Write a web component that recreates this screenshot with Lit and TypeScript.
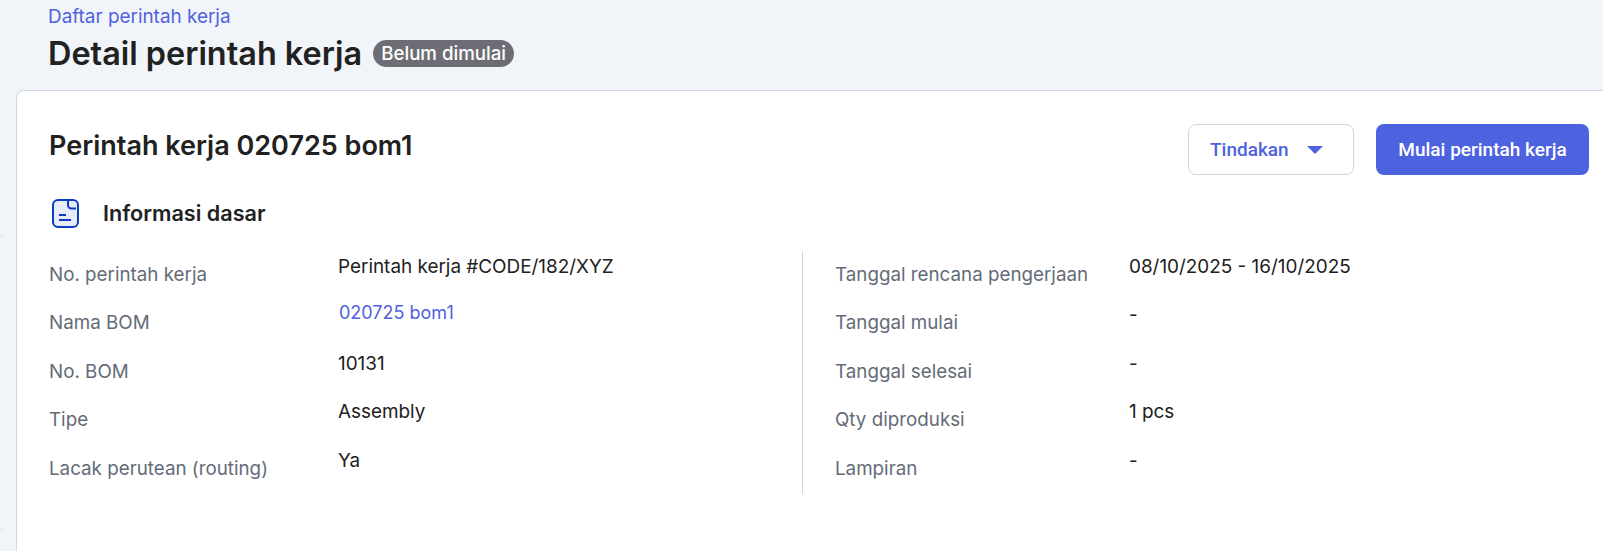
import { LitElement, html, css } from "lit";
import { customElement } from "lit/decorators.js";

const left: [string, string, boolean?][] = [
  ["No. perintah kerja", "Perintah kerja #CODE/182/XYZ"],
  ["Nama BOM", "020725 bom1", true],
  ["No. BOM", "10131"],
  ["Tipe", "Assembly"],
  ["Lacak perutean (routing)", "Ya"],
];
const right: [string, string, boolean?][] = [
  ["Tanggal rencana pengerjaan", "08/10/2025 - 16/10/2025"],
  ["Tanggal mulai", "-"],
  ["Tanggal selesai", "-"],
  ["Qty diproduksi", "1 pcs"],
  ["Lampiran", "-"],
];

@customElement("app-root")
export class AppRoot extends LitElement {
  static styles = css`
    :host {
      display: block;
      width: 1603px;
      height: 551px;
      overflow: hidden;
      background: #f1f4f9;
      font-family: Inter, "Liberation Sans", sans-serif;
      color: #212121;
    }
    .head {
      padding: 6px 0 0 48px;
      height: 85px;
      box-sizing: border-box;
    }
    .crumb {
      font-size: 18.9px;
      line-height: 22px;
      color: #4f62df;
    }
    .title-row {
      display: flex;
      align-items: center;
      gap: 11px;
      margin-top: 6px;
    }
    h1 {
      margin: 0;
      font-size: 32.4px;
      line-height: 40px;
      font-weight: 600;
    }
    .badge {
      background: #6d6e75;
      color: #fff;
      font-size: 18.7px;
      font-weight: 500;
      line-height: 27px;
      height: 27px;
      padding: 0 8px;
      border-radius: 14px;
      margin-top: -1px;
    }
    .card {
      margin: 5px 0 0 16px;
      height: 600px;
      box-sizing: border-box;
      background: #fff;
      border: 1px solid #d3d8e3;
      border-right: none;
      border-radius: 8px 0 0 0;
      padding: 33px 14px 0 32px;
    }
    .top {
      display: flex;
      justify-content: space-between;
      align-items: flex-start;
    }
    h2 {
      margin: 4px 0 0;
      font-size: 27px;
      line-height: 36px;
      font-weight: 600;
    }
    .actions {
      display: flex;
      gap: 22px;
    }
    .btn {
      height: 51px;
      box-sizing: border-box;
      display: flex;
      align-items: center;
      border-radius: 8px;
      font-family: Roboto, sans-serif;
      font-size: 19px;
      font-weight: 500;
    }
    .outline {
      width: 166px;
      padding-left: 21px;
      gap: 18px;
      background: #fff;
      color: #4f62df;
      border: 1px solid #cfd5e1;
    }
    .caret {
      width: 0;
      height: 0;
      border-left: 8.5px solid transparent;
      border-right: 8.5px solid transparent;
      border-top: 8px solid #4f62df;
    }
    .solid {
      width: 213px;
      justify-content: center;
      background: #4d62df;
      color: #fff;
    }
    .section {
      display: flex;
      align-items: center;
      gap: 20px;
      margin-top: 22px;
      padding-left: 2px;
    }
    .section svg {
      display: block;
    }
    h3 {
      margin: 0;
      font-size: 21.6px;
      line-height: 28px;
      font-weight: 600;
    }
    .info {
      display: flex;
      margin-top: 22px;
    }
    .col {
      display: grid;
      grid-template-columns: 289px 1fr;
      grid-auto-rows: 48.4px;
      width: 753px;
      height: 243px;
    }
    .col.second {
      grid-template-columns: 295px 1fr;
      width: auto;
      flex: 1;
      border-left: 1px solid #d6d6d6;
      padding-left: 32px;
      box-sizing: border-box;
    }
    .label {
      font-size: 18.8px;
      line-height: 24px;
      color: #646b78;
      padding-top: 12px;
    }
    .value {
      font-size: 18.9px;
      line-height: 24px;
      color: #212121;
      padding-top: 4px;
    }
    .link {
      color: #4f62df;
      font-size: 18px;
      padding-top: 2px;
      padding-left: 1px;
    }
    .second .value {
      margin-left: -1px;
    }
    .tick {
      position: absolute;
      left: 0;
      width: 5px;
      height: 1px;
      background: #e2e5ec;
    }
  `;

  private rows(items: [string, string, boolean?][]) {
    return items.map(
      ([k, v, link]) => html`
        <div class="label">${k}</div>
        <div class="value ${link ? "link" : ""}">${v}</div>
      `
    );
  }

  render() {
    return html`
      <span class="tick" style="top:236px"></span>
      <span class="tick" style="top:529px"></span>
      <div class="head">
        <div class="crumb">Daftar perintah kerja</div>
        <div class="title-row">
          <h1>Detail perintah kerja</h1>
          <span class="badge">Belum dimulai</span>
        </div>
      </div>
      <div class="card">
        <div class="top">
          <h2>Perintah kerja 020725 bom1</h2>
          <div class="actions">
            <div class="btn outline">Tindakan <span class="caret"></span></div>
            <div class="btn solid">Mulai perintah kerja</div>
          </div>
        </div>
        <div class="section">
          <svg width="32" height="32" viewBox="0 0 32 32" fill="none">
            <path d="M7 3h15a5 5 0 0 1 5 5v17a5 5 0 0 1-5 5H7a5 5 0 0 1-5-5V8a5 5 0 0 1 5-5Z" fill="#e8ebfa" stroke="#0b3cc4" stroke-width="2"/>
            <path d="M17 3v5a3.5 3.5 0 0 0 3.5 3.5H25" stroke="#0b3cc4" stroke-width="2"/>
            <path d="M8 18h7M8 23h12" stroke="#0b3cc4" stroke-width="2"/>
          </svg>
          <h3>Informasi dasar</h3>
        </div>
        <div class="info">
          <div class="col">${this.rows(left)}</div>
          <div class="col second">${this.rows(right)}</div>
        </div>
      </div>
    `;
  }
}
